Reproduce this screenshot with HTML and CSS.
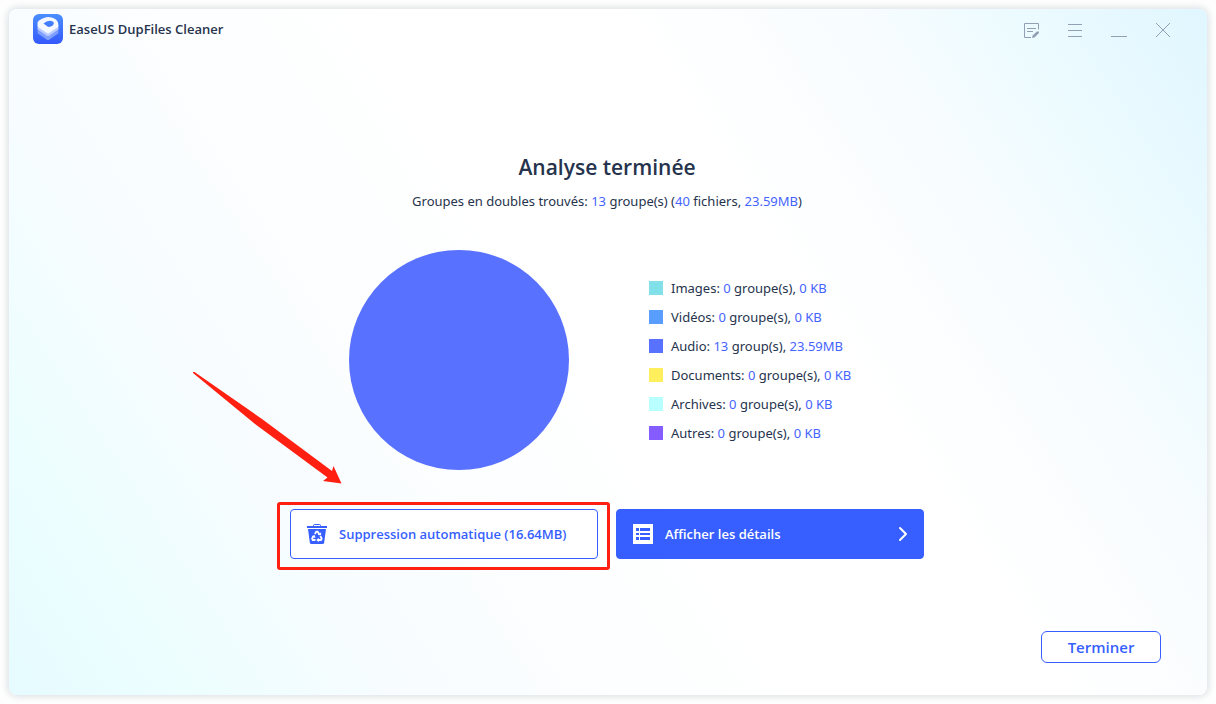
FILE: index.html
```html
<!DOCTYPE html>
<html lang="fr">
<head>
    <meta charset="UTF-8">
    <meta name="viewport" content="width=device-width, initial-scale=1">
    <title>EaseUS DupFiles Cleaner</title>

    <link rel="stylesheet" href="styles.css">
</head>

<body>
    <div class="window">
        <header class="titlebar">
            <svg class="logo" viewBox="0 0 30 30" aria-hidden="true">
                <defs>
                    <linearGradient id="logo-bg" x1="0" y1="0" x2="0" y2="1">
                        <stop offset="0" stop-color="#4a8fff"/>
                        <stop offset="1" stop-color="#3558fb"/>
                    </linearGradient>
                </defs>
                <rect width="30" height="30" rx="6" fill="url(#logo-bg)"/>
                <path d="M4.500 16l10.500 6.500L25.500 16v2.500q0 .7-.8 1.200l-8.200 5.700q-1.500 1-3 0l-8.200-5.700q-.8-.5-.8-1.200z" fill="#7f9fff"/>
                <path d="M4.500 12.500L15 19l10.500-6.500V15q0 .7-.8 1.200l-8.200 5.600q-1.500 1-3 0l-8.200-5.600q-.8-.5-.8-1.200z" fill="#b9cbff"/>
                <path fill-rule="evenodd" d="M4.500 9q0-1.500 1.500-2.500Q11 3 15.500 3q4.500 0 7.500 2.500 2.500 2.200 2.500 6 0 1.300-1 2l-8 5.200q-1.500 1-3 0l-8-5.200q-1-.7-1-1.700zM10.500 9.500l4 3q1 .7 2.300.3 3.700-1 4-3.300.2-2.700-4.300-2.800-3 .1-6 2.800z" fill="#f5f8ff"/>
            </svg>
            <span class="app-name">EaseUS DupFiles Cleaner</span>

            <div class="window-controls">
                <button type="button" aria-label="Commentaires">
                    <svg viewBox="0 0 16 16">
                        <path d="M8 15.500H1.500v-14h14v6M4 6.500h9M4 9.500h6"/>
                        <path class="pencil" d="M9 16l.6-2.500L13.800 9.500l2.200 0v1.500L11.500 15.500z"/>
                    </svg>
                </button>
                <button type="button" aria-label="Menu">
                    <svg viewBox="0 0 16 16"><path d="M1 2.500h14M1 8.500h14M1 14.500h14"/></svg>
                </button>
                <button type="button" aria-label="Réduire">
                    <svg viewBox="0 0 16 16"><path d="M0 14.500h16"/></svg>
                </button>
                <button type="button" aria-label="Fermer">
                    <svg viewBox="0 0 16 16"><path d="M1 1l14 14M15 1L1 15"/></svg>
                </button>
            </div>
        </header>

        <main class="content">
            <h1>Analyse terminée</h1>
            <p class="summary">Groupes en doubles trouvés: <b>13</b> groupe(s) (<b>40</b> fichiers, <b>23.59MB</b>)</p>

            <div class="report">
                <div class="pie"></div>
                <ul class="legend">
                    <li><i class="swatch images"></i><span>Images: <b>0</b> groupe(s), <b>0 KB</b></span></li>
                    <li><i class="swatch videos"></i><span>Vidéos: <b>0</b> groupe(s), <b>0 KB</b></span></li>
                    <li><i class="swatch audio"></i><span>Audio: <b>13</b> group(s), <b>23.59MB</b></span></li>
                    <li><i class="swatch documents"></i><span>Documents: <b>0</b> groupe(s), <b>0 KB</b></span></li>
                    <li><i class="swatch archives"></i><span>Archives: <b>0</b> groupe(s), <b>0 KB</b></span></li>
                    <li><i class="swatch others"></i><span>Autres: <b>0</b> groupe(s), <b>0 KB</b></span></li>
                </ul>
            </div>

            <div class="actions">
                <div class="marked">
                    <button type="button" class="action">
                        <svg class="icon" viewBox="0 0 20 20" aria-hidden="true">
                            <path d="M6.500 3V1.500q0-1 1-1h5q1 0 1 1V3" fill="none" stroke="#375fff"/>
                            <path d="M0 2h20v2H0zM1 5h18l-1.800 13.500q-.2 1.500-1.700 1.500h-11q-1.500 0-1.700-1.500z" fill="#375fff"/>
                            <path d="M7.800 10l1.500-2.300h1.400l1.700 2.700M13.300 12l1.400 2.600-.7 1.400h-3M8.500 16H5.700l-.6-1.400 1.500-2.700" fill="none" stroke="#fff" stroke-width="1.800"/>
                            <path d="M10.700 10.900l3.300.4.200-3zM11.700 13.800v4.400L9.300 16zM4.700 12.300l3-1.200.8 3.100z" fill="#fff"/>
                        </svg>
                        <span>Suppression automatique (16.64MB)</span>
                    </button>
                    <div class="mark-frame"></div>
                    <svg class="mark-arrow" viewBox="0 0 150 113" aria-hidden="true">
                        <path d="M1 1l1.500 0L70 48l70 52 1.500-5L149.500 112.500 131 110l4.500-3.500L63 53 1 2z" fill="#ff2012"/>
                    </svg>
                </div>
                <button type="button" class="action primary">
                    <svg class="icon" viewBox="0 0 20 20" aria-hidden="true">
                        <path d="M0 0h20v20H0z" fill="#fff"/>
                        <path d="M3 4h3v3H3zM3 9h3v2H3zM3 13h3v3H3zM7 4h10v3H7zM7 9h10v2H7zM7 13h10v3H7z" fill="#375fff"/>
                    </svg>
                    <span>Afficher les détails</span>
                    <svg class="chevron" viewBox="0 0 8 14" aria-hidden="true"><path d="M1 1l6 6-6 6"/></svg>
                </button>
            </div>
        </main>

        <footer class="footer">
            <button type="button" class="finish">Terminer</button>
        </footer>
    </div>
</body>
</html>
```

FILE: styles.css
```css
* {
    box-sizing: border-box;
}

body {
    display: flex;
    min-height: 100vh;
    margin: 0;
    padding: 9px;
    background: #fdfefd;
    color: #26334d;
    font: 13px/20px "Noto Sans", "Open Sans", sans-serif;
}

button {
    font: inherit;
    cursor: pointer;
}

.window {
    flex: 1;
    display: flex;
    flex-direction: column;
    border-radius: 8px;
    background: linear-gradient(57deg, #e6fbff 0%, #ecfeff 10%, #f7fcff 24%, #fdfeff 38%, #fff 50%, #fff 64%, #f8fcff 78%, #ecfbff 88%, #e1f6ff 100%);
    box-shadow: 0 0 6px 2px #dfe2e7;
}

.titlebar {
    display: flex;
    align-items: center;
    gap: 6px;
    height: 40px;
    padding: 0 22px 0 24px;
}

.logo {
    width: 30px;
    height: 30px;
}

.app-name,
h1,
.action,
.finish {
    font-family: "Open Sans", "Noto Sans", sans-serif;
    font-weight: 600;
}

.window-controls {
    display: flex;
    margin-left: auto;
}

.window-controls button {
    width: 44px;
    height: 40px;
    padding: 2px 0 0;
    border: 0;
    background: none;
}

.window-controls svg {
    display: block;
    width: 16px;
    height: 16px;
    margin: 0 auto;
    fill: none;
    stroke: #93a0b3;
}

.window-controls .pencil {
    fill: #93a0b3;
    stroke: none;
}

.content {
    flex: 1;
    display: flex;
    flex-direction: column;
    align-items: center;
    padding: 102px 2px 0 0;
}

h1 {
    margin: 0;
    font-size: 21px;
    line-height: 32px;
}

.summary {
    margin: 8px 0 0;
}

.content b {
    color: #4563ff;
    font-weight: normal;
}

.report {
    display: flex;
    align-items: center;
    gap: 80px;
    margin-top: 39px;
}

.pie {
    width: 220px;
    height: 220px;
    border-radius: 50%;
    background: #5971ff;
}

.legend {
    display: grid;
    gap: 9px;
    min-width: 216px;
    margin: 0;
    padding: 0;
    list-style: none;
}

.legend li {
    display: flex;
    align-items: center;
    gap: 8px;
}

.swatch {
    width: 14px;
    height: 14px;
}

.images { background: #82e1e8; }
.videos { background: #599eff; }
.audio { background: #5971ff; }
.documents { background: #ffef5c; }
.archives { background: #b8ffff; }
.others { background: #855cff; }

.actions {
    display: flex;
    gap: 18px;
    margin-top: 39px;
}

.action {
    display: flex;
    align-items: center;
    gap: 12px;
    width: 308px;
    height: 50px;
    padding: 0 16px;
    border: 1px solid #375fff;
    border-radius: 4px;
    background: #fff;
    color: #375fff;
}

.primary {
    background: #375fff;
    color: #fff;
}

.icon {
    width: 20px;
    height: 20px;
}

.chevron {
    width: 8px;
    height: 14px;
    margin-left: auto;
    fill: none;
    stroke: #fff;
    stroke-width: 2;
    stroke-linecap: round;
    stroke-linejoin: round;
    overflow: visible;
}

/* red frame and arrow drawn over the button */
.marked {
    position: relative;
}

.mark-frame {
    position: absolute;
    inset: -7px -12px -11px -13px;
    border: 3px solid #ff2012;
    border-radius: 3px;
    pointer-events: none;
}

.mark-arrow {
    position: absolute;
    left: -98px;
    top: -138px;
    width: 150px;
    height: 113px;
    pointer-events: none;
}

.footer {
    display: flex;
    justify-content: flex-end;
    padding: 0 46px 32px;
}

.finish {
    width: 120px;
    height: 32px;
    padding: 0;
    border: 1px solid #375fff;
    border-radius: 6px;
    background: #fff;
    color: #375fff;
    font-size: 15px;
}
```
